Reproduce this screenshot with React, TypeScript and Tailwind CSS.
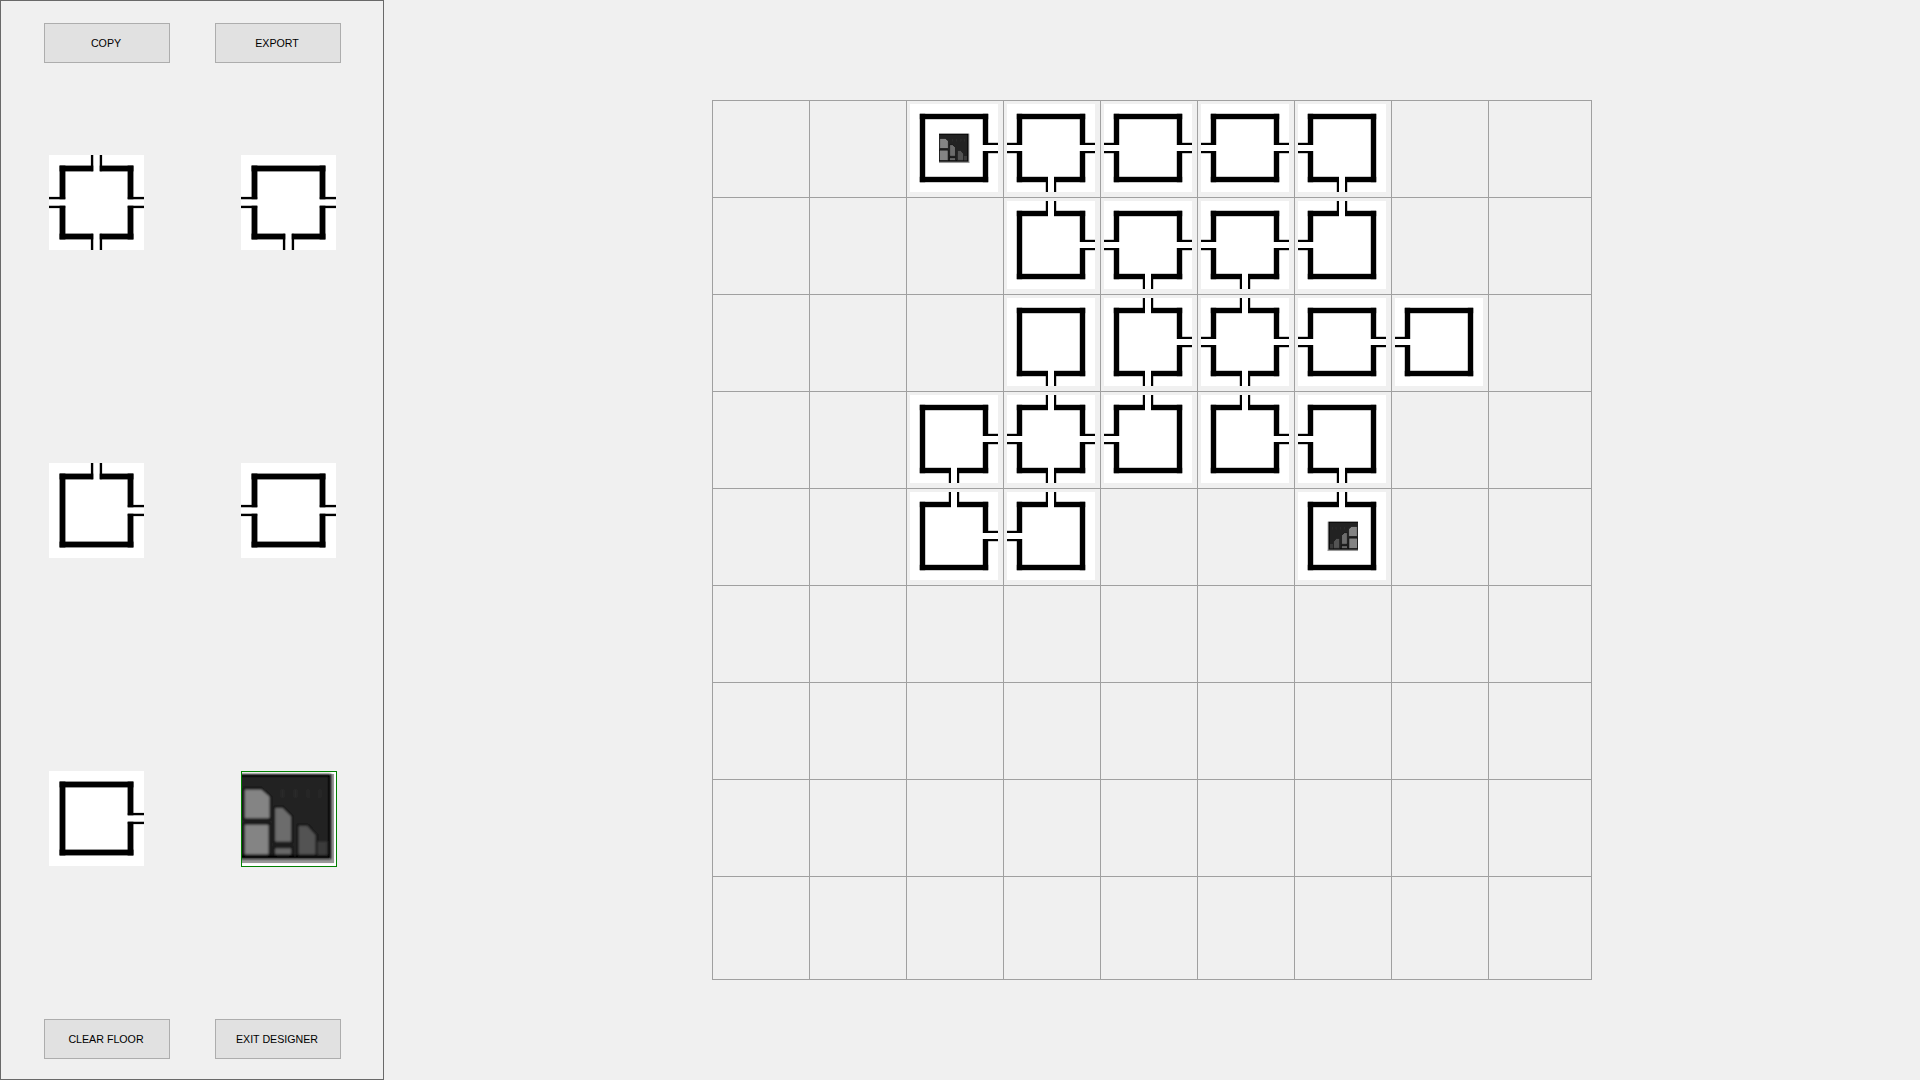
const sideRects = (sides: string) => {
  const r: number[][] = [];
  if (sides.includes("T")) {
    r.push([9.8, 9.8, 31.2, 5.4], [47, 9.8, 31.2, 5.4], [38.8, -4, 2.2, 19], [47, -4, 2.2, 19]);
  } else {
    r.push([9.8, 9.8, 68.4, 5.4]);
  }
  if (sides.includes("B")) {
    r.push([9.8, 72.8, 31.2, 5.4], [47, 72.8, 31.2, 5.4], [38.8, 73, 2.2, 19], [47, 73, 2.2, 19]);
  } else {
    r.push([9.8, 72.8, 68.4, 5.4]);
  }
  if (sides.includes("L")) {
    r.push([9.8, 9.8, 5.4, 31.2], [9.8, 47, 5.4, 31.2], [-4, 38.8, 19, 2.2], [-4, 47, 19, 2.2]);
  } else {
    r.push([9.8, 9.8, 5.4, 68.4]);
  }
  if (sides.includes("R")) {
    r.push([72.8, 9.8, 5.4, 31.2], [72.8, 47, 5.4, 31.2], [73, 38.8, 19, 2.2], [73, 47, 19, 2.2]);
  } else {
    r.push([72.8, 9.8, 5.4, 68.4]);
  }
  return r;
};

function StairsIcon({ className }: { className: string }) {
  return (
    <svg viewBox="0 0 96 96" preserveAspectRatio="none" className={className}>
      <defs>
        <filter id="soft" x="-5%" y="-5%" width="110%" height="110%">
          <feGaussianBlur stdDeviation="1" />
        </filter>
      </defs>
      <rect width="96" height="96" fill="#ffffff" />
      <rect x="90" y="2" width="4" height="90" fill="#9a9a9a" />
      <rect x="0" y="89" width="94" height="4" fill="#9a9a9a" />
      <g filter="url(#soft)">
        <rect x="-3" y="2" width="94" height="87" fill="#000000" />
        <rect x="-3" y="5" width="91" height="80" fill="#232323" />
        <rect x="40" y="18" width="3" height="8" fill="#2c2c2c" />
        <rect x="53" y="18" width="3" height="8" fill="#2c2c2c" />
        <rect x="66" y="18" width="3" height="8" fill="#2c2c2c" />
        <rect x="78" y="18" width="3" height="8" fill="#2c2c2c" />
        <g stroke="#000000" strokeWidth="1.6">
          <polygon points="2,17 20,17 29,25 29,48 2,48" fill="#848484" />
          <rect x="2" y="53" width="26" height="32" fill="#848484" />
          <polygon points="33,36 42,36 51,45 51,72 33,72" fill="#6c6c6c" />
          <rect x="33" y="77" width="18" height="8" fill="#686868" />
          <polygon points="57,54 67,54 76,64 76,85 57,85" fill="#525252" stroke="#111111" />
        </g>
        <rect x="77" y="71" width="10" height="14" fill="#3a3a3a" />
      </g>
    </svg>
  );
}

function Tile({
  sides,
  size = "w-[88px] h-[88px]",
  icon,
}: {
  sides: string;
  size?: string;
  icon?: "left" | "right";
}) {
  return (
    <div className={`${size} relative bg-white`}>
      <svg viewBox="0 0 88 88" className="w-full h-full block">
        <defs>
          <filter id="tileSoft" x="-10%" y="-10%" width="120%" height="120%">
            <feGaussianBlur stdDeviation="0.3" />
          </filter>
        </defs>
        <g filter="url(#tileSoft)">
          {sideRects(sides).map((r, i) => (
            <rect key={i} x={r[0]} y={r[1]} width={r[2]} height={r[3]} fill="#000000" />
          ))}
        </g>
      </svg>
      {icon && (
        <div className="absolute left-[29px] top-[29px]">
          <StairsIcon
            className={`w-[31px] h-[31px] block ${icon === "right" ? "-scale-x-100" : ""}`}
          />
        </div>
      )}
    </div>
  );
}

function ToolButton({ label }: { label: string }) {
  return (
    <button className="w-[126px] h-[40px] bg-[#e1e1e1] border border-[#adadad] text-[10.67px] text-black font-['Liberation_Sans',Arial,sans-serif] pr-[2px]">
      {label}
    </button>
  );
}

// row-col -> tile on the floor plan
const floor: Record<string, { sides: string; icon?: "left" | "right" }> = {
  "0-2": { sides: "R", icon: "left" },
  "0-3": { sides: "LRB" },
  "0-4": { sides: "LR" },
  "0-5": { sides: "LR" },
  "0-6": { sides: "LB" },
  "1-3": { sides: "TR" },
  "1-4": { sides: "LRB" },
  "1-5": { sides: "LRB" },
  "1-6": { sides: "TL" },
  "2-3": { sides: "B" },
  "2-4": { sides: "TRB" },
  "2-5": { sides: "TRBL" },
  "2-6": { sides: "LR" },
  "2-7": { sides: "L" },
  "3-2": { sides: "RB" },
  "3-3": { sides: "TLRB" },
  "3-4": { sides: "TL" },
  "3-5": { sides: "TR" },
  "3-6": { sides: "LB" },
  "4-2": { sides: "TR" },
  "4-3": { sides: "TL" },
  "4-6": { sides: "T", icon: "right" },
};

export default function App() {
  const cells = Array.from({ length: 81 }, (_, i) => `${Math.floor(i / 9)}-${i % 9}`);

  return (
    <div className="flex w-[1920px] h-[1080px] overflow-hidden bg-[#f0f0f0]">
      {/* Left tool panel */}
      <aside className="w-[384px] h-[1080px] shrink-0 flex flex-col border border-[#696969] pl-[43px] pt-[22px] pb-[20px]">
        <div className="flex gap-[45px]">
          <ToolButton label="COPY" />
          <ToolButton label="EXPORT" />
        </div>

        <div className="mt-[92px] ml-[5px] grid grid-cols-[95px_95px] gap-x-[97px] gap-y-[213px]">
          <Tile sides="TRBL" size="w-[95px] h-[95px]" />
          <Tile sides="LRB" size="w-[95px] h-[95px]" />
          <Tile sides="TR" size="w-[95px] h-[95px]" />
          <Tile sides="LR" size="w-[95px] h-[95px]" />
          <Tile sides="R" size="w-[95px] h-[95px]" />
          <div className="w-[96px] h-[96px] border border-[#008000]">
            <StairsIcon className="w-full h-full block" />
          </div>
        </div>

        <div className="mt-auto flex gap-[45px]">
          <ToolButton label="CLEAR FLOOR" />
          <ToolButton label="EXIT DESIGNER" />
        </div>
      </aside>

      {/* Floor grid */}
      <main className="pl-[328px] pt-[100px]">
        <div className="grid grid-cols-[repeat(8,97px)_103px] grid-rows-[repeat(8,97px)_103px] border-r border-b border-[#a0a0a0]">
          {cells.map((key) => (
            <div key={key} className="border-l border-t border-[#a0a0a0] pl-[3px] pt-[3px]">
              {floor[key] && <Tile sides={floor[key].sides} icon={floor[key].icon} />}
            </div>
          ))}
        </div>
      </main>
    </div>
  );
}
